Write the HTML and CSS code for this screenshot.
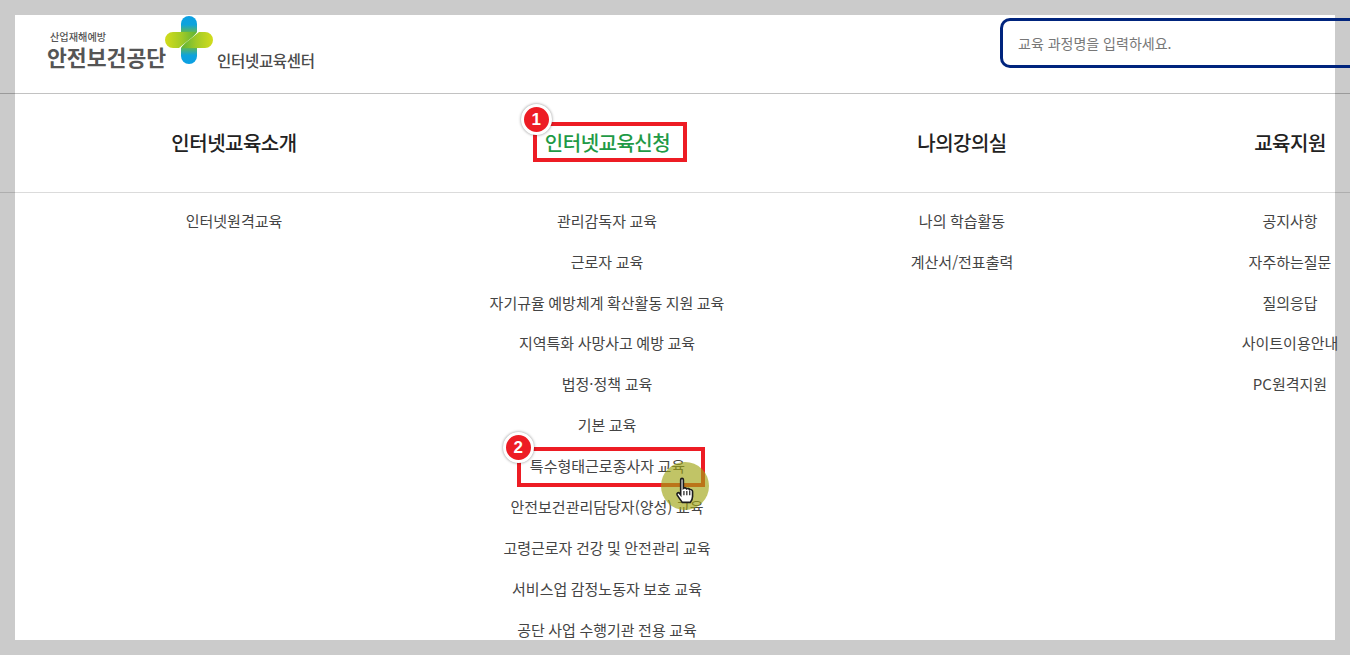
FILE: index.html
```html
<!DOCTYPE html>
<html lang="ko">
<head>
<meta charset="utf-8">
<title>인터넷교육센터</title>
<link rel="stylesheet" href="styles.css">
</head>
<body>
<div class="sheet">
  <header class="top">
    <div class="logo">
      <div class="logo-words">
        <span class="logo-small">산업재해예방</span>
        <span class="logo-big">안전보건공단</span>
      </div>
      <svg class="logo-mark" width="48" height="48" viewBox="0 0 48 48">
        <defs>
          <linearGradient id="blue" x1="0" y1="0" x2="0" y2="1"><stop offset="0" stop-color="#0b9fe3"/><stop offset=".55" stop-color="#0ea3dc"/><stop offset="1" stop-color="#5cb65a"/></linearGradient>
          <linearGradient id="lime" x1="0" y1="0" x2="1" y2="0"><stop offset="0" stop-color="#d2dc1c"/><stop offset=".5" stop-color="#a4cb26"/><stop offset="1" stop-color="#5cb336"/></linearGradient>
          <g id="half">
            <path d="M8 16H32C30 20 21 26 14 32H8A8 8 0 0 1 8 16Z" fill="url(#lime)"/>
            <path d="M16 16V8A8 8 0 0 1 32 8V16Z" fill="url(#blue)"/>
          </g>
        </defs>
        <use href="#half"/>
        <use href="#half" transform="rotate(180 24 24)"/>
      </svg>
      <span class="logo-center">인터넷교육센터</span>
    </div>
    <div class="search">교육 과정명을 입력하세요.</div>
  </header>
  <nav class="menu-heads">
    <div class="head">인터넷교육소개</div>
    <div class="head head-active"><span class="callout callout-one"><span class="badge">1</span>인터넷교육신청</span></div>
    <div class="head">나의강의실</div>
    <div class="head">교육지원</div>
  </nav>
  <div class="menu-lists">
    <ul class="list">
      <li>인터넷원격교육</li>
    </ul>
    <ul class="list">
      <li>관리감독자 교육</li>
      <li>근로자 교육</li>
      <li>자기규율 예방체계 확산활동 지원 교육</li>
      <li>지역특화 사망사고 예방 교육</li>
      <li>법정·정책 교육</li>
      <li>기본 교육</li>
      <li><span class="callout callout-two"><span class="badge">2</span>특수형태근로종사자 교육<span class="pointer"><svg width="20" height="27" viewBox="0 0 18 25"><path d="M5 2.500C5 .8 7.500 .8 7.500 2.500V10.500C8.500 9.800 10 10 10.500 11C11.500 10.400 13 10.700 13.300 11.800C14.500 11.300 16 12 16 13.500V18C16 20.500 15 22 14 23.500H6.500C5 21.500 3.500 19.500 1.800 16.800C.8 15 2.800 13.800 4 15.200L5 16.500Z" fill="#fff" stroke="#1c1c1c" stroke-width="1.500"/><path d="M8 13V17M10.700 13V17M13.400 13V17" stroke="#1c1c1c" stroke-width="1.100"/></svg></span></span></li>
      <li>안전보건관리담당자(양성) 교육</li>
      <li>고령근로자 건강 및 안전관리 교육</li>
      <li>서비스업 감정노동자 보호 교육</li>
      <li>공단 사업 수행기관 전용 교육</li>
    </ul>
    <ul class="list">
      <li>나의 학습활동</li>
      <li>계산서/전표출력</li>
    </ul>
    <ul class="list">
      <li>공지사항</li>
      <li>자주하는질문</li>
      <li>질의응답</li>
      <li>사이트이용안내</li>
      <li>PC원격지원</li>
    </ul>
  </div>
</div>
</body>
</html>
```
FILE: styles.css
```css
* { box-sizing: border-box; }
html, body { margin: 0; height: 655px; overflow: hidden; }
body {
  background: #cbcbcb;
  padding: 15px;
  font-family: "Noto Sans CJK KR", "Noto Sans", sans-serif;
  color: #444;
}
.sheet { width: 1320px; height: 625px; background: #fff; position: relative; }
.top {
  height: 79px;
  margin: 0 -15px;
  padding: 0 0 0 15px;
  border-bottom: 1px solid rgba(0, 0, 0, .24);
  display: flex;
  justify-content: space-between;
  align-items: flex-start;
}
.logo { display: flex; align-items: flex-start; margin-left: 32px; }
.logo-words { display: flex; flex-direction: column; margin-top: 15px; color: #555; width: 118px; }
.logo-small { font-size: 10.200px; line-height: 14px; margin-left: 3px; font-weight: 500; white-space: nowrap; }
.logo-big { font-size: 21.600px; line-height: 26px; font-weight: 700; white-space: nowrap; }
.logo-mark { margin-top: 1px; flex: none; }
.logo-center { font-size: 15.500px; line-height: 20px; margin: 35px 0 0 4px; font-weight: 500; letter-spacing: -.3px; color: #4a4a4a; }
.search {
  width: 350px;
  height: 50px;
  margin-top: 3px;
  border: 3px solid #00247d;
  border-right: 0;
  border-radius: 10px 0 0 10px;
  padding-left: 15px;
  font-size: 14px;
  line-height: 44px;
  color: #777;
}
.menu-heads, .menu-lists {
  display: grid;
  grid-template-columns: 438px 308px 402px 254px;
  width: 1402px;
}
.menu-heads {
  height: 99px;
  padding-bottom: 4px;
  position: relative;
  align-items: center;
}
.menu-heads::after {
  content: "";
  position: absolute;
  left: -15px;
  width: 1365px;
  bottom: 0;
  height: 1px;
  background: rgba(0, 0, 0, .14);
}
.head {
  text-align: center;
  font-size: 20px;
  letter-spacing: -.5px;
  font-weight: 500;
  color: #222;
  line-height: 28px;
  padding-top: 2px;
}
.head-active { color: #1f9a46; padding-top: 0; }
.callout { position: relative; display: inline-block; border: 4px solid #ed1c24; }
.callout-one { padding: 0 13px 0 8px; height: 40px; line-height: 34px; margin-left: 6px; }
.callout-two { padding: 0 16px 0 9px; height: 40px; line-height: 30px; margin: -5px 0 -5px 8px; }
.badge {
  position: absolute;
  width: 31px;
  height: 31px;
  border-radius: 50%;
  background: #ed1c24;
  border: 3px solid #fff;
  box-shadow: 0 0 3px rgba(0, 0, 0, .45);
  color: #fff;
  font-size: 17px;
  letter-spacing: 0;
  font-weight: 700;
  line-height: 25px;
  text-align: center;
  left: -16px;
  top: -22px;
  font-family: "Liberation Sans", sans-serif;
}
.callout-two .badge { left: -18px; top: -19px; }
.menu-lists { padding-top: 7.750px; }
.list { list-style: none; margin: 0; padding: 0; }
.list li {
  height: 40.900px;
  line-height: 40.900px;
  text-align: center;
  font-size: 15px;
  word-spacing: -.7px;
  white-space: nowrap;
}
.pointer {
  position: absolute;
  width: 48px;
  height: 48px;
  border-radius: 50%;
  background: rgba(160, 165, 20, .65);
  left: 140px;
  top: 11px;
  padding-top: 8px;
  display: flex;
  align-items: center;
  justify-content: center;
}
```
